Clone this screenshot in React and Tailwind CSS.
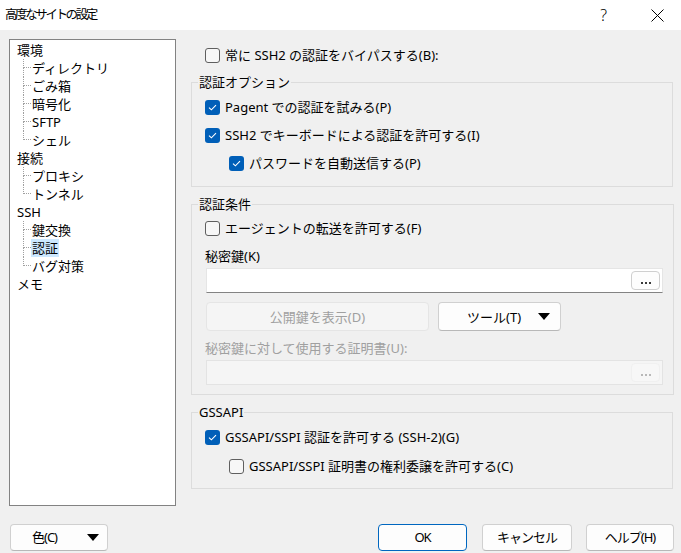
import React from 'react';

const font = "font-['Noto_Sans','Noto_Sans_CJK_JP',sans-serif]";

const treeItems = [
  { label: '環境', level: 0 },
  { label: 'ディレクトリ', level: 1 },
  { label: 'ごみ箱', level: 1 },
  { label: '暗号化', level: 1 },
  { label: 'SFTP', level: 1 },
  { label: 'シェル', level: 1, last: true },
  { label: '接続', level: 0 },
  { label: 'プロキシ', level: 1 },
  { label: 'トンネル', level: 1, last: true },
  { label: 'SSH', level: 0 },
  { label: '鍵交換', level: 1 },
  { label: '認証', level: 1, selected: true },
  { label: 'バグ対策', level: 1, last: true },
  { label: 'メモ', level: 0 },
];

const Check = ({ checked }) =>
  checked ? (
    <span className="w-[15px] h-[15px] rounded-[3px] bg-[#005fb8] flex items-center justify-center shrink-0">
      <svg width="9" height="7" viewBox="0 0 9 7">
        <path d="M1 3.6 L3.4 5.8 L8 1.2" fill="none" stroke="white" strokeWidth="1.1" />
      </svg>
    </span>
  ) : (
    <span className="w-[15px] h-[15px] rounded-[3px] border border-[#5f5f5f] bg-[#f7f7f7] shrink-0" />
  );

const CheckRow = ({ checked, children, indent }) => (
  <div className={`flex items-center h-[18px] gap-[5px] ${indent ? 'ml-[24px]' : ''}`}>
    <Check checked={checked} />
    <span>{children}</span>
  </div>
);

const Arrow = () => (
  <svg width="12" height="7" viewBox="0 0 12 7">
    <polygon points="0,0 12,0 6,7" fill="#000" />
  </svg>
);

const Dots = ({ disabled }) => (
  <div className="flex gap-[2px] items-end h-[6px]">
    <span className={`w-[2px] h-[2px] ${disabled ? 'bg-[#b8b8b8]' : 'bg-[#3a3a3a]'}`} />
    <span className={`w-[2px] h-[2px] ${disabled ? 'bg-[#b8b8b8]' : 'bg-[#3a3a3a]'}`} />
    <span className={`w-[2px] h-[2px] ${disabled ? 'bg-[#b8b8b8]' : 'bg-[#3a3a3a]'}`} />
  </div>
);

const Field = ({ disabled }) => (
  <div
    className={`ml-[1px] w-[457px] h-[25px] flex items-center justify-end pr-[2px] ${
      disabled
        ? 'bg-[#f5f5f5] border border-[#e3e3e3]'
        : 'bg-white border border-[#e5e5e5] border-b-[#838383]'
    }`}
  >
    <div
      className={`w-[29px] h-[19px] rounded-[4px] flex items-center justify-center ${
        disabled ? 'bg-[#f7f7f7] border border-[#f0f0f0]' : 'bg-[#fdfdfd] border border-[#cfcfcf]'
      }`}
    >
      <Dots disabled={disabled} />
    </div>
  </div>
);

const Group = ({ title, children, className }) => (
  <fieldset className={`border border-[#dcdcdc] pl-[13px] pr-[10px] ${className}`}>
    <legend className="-ml-[7px] px-[1px] h-[18px] leading-[18px]">{title}</legend>
    {children}
  </fieldset>
);

const TreeRow = ({ item }) => {
  if (item.level === 0) {
    return <div className="h-[18px] leading-[18px] pl-[7px]">{item.label}</div>;
  }
  return (
    <div className="h-[18px] flex items-stretch pl-[13px]">
      <div className="w-[8px] flex flex-col">
        <div className="h-[9px] border-l border-b border-dotted border-[#a0a0a0]" />
        <div className={`h-[9px] ${item.last ? '' : 'border-l border-dotted border-[#a0a0a0]'}`} />
      </div>
      <span className={`leading-[18px] px-[1px] ${item.selected ? 'bg-[#cce8ff]' : ''}`}>
        {item.label}
      </span>
    </div>
  );
};

const Button = ({ children, primary, className }) => (
  <div
    className={`h-[27px] rounded-[4px] flex items-center justify-center bg-[#fdfdfd] border ${
      primary ? 'border-[#0067c0]' : 'border-[#d0d0d0] border-b-[#b8b8b8]'
    } ${className}`}
  >
    {children}
  </div>
);

export default function App() {
  return (
    <div className={`w-[681px] h-[553px] bg-[#f0f0f0] flex flex-col text-[13px] text-black ${font}`}>
      {/* title bar */}
      <div className="h-[30px] bg-white flex items-center shrink-0">
        <span className="ml-[5px] text-[12.5px] tracking-[-2.4px]">高度なサイトの設定</span>
        <span className="ml-auto text-[16px] font-light mr-[44px]">?</span>
        <svg width="13" height="13" viewBox="0 0 13 13" className="mr-[17px]">
          <path d="M0.5 0.5 L12.5 12.5 M12.5 0.5 L0.5 12.5" stroke="#000" strokeWidth="1" />
        </svg>
      </div>

      <div className="flex pt-[9px] pl-[9px]">
        {/* tree */}
        <div className="w-[167px] h-[467px] bg-white border border-[#828282] pt-[1px] shrink-0">
          {treeItems.map((it) => (
            <TreeRow key={it.label} item={it} />
          ))}
        </div>

        {/* right pane */}
        <div className="ml-[15px] w-[482px] flex flex-col leading-[18px]">
          <div className="mt-[7px] pl-[14px]">
            <CheckRow>常に SSH2 の認証をバイパスする(B):</CheckRow>
          </div>

          <Group title="認証オプション" className="mt-[9px] pt-[7px] pb-[14px]">
            <div className="flex flex-col gap-[10px]">
              <CheckRow checked>Pagent での認証を試みる(P)</CheckRow>
              <CheckRow checked>SSH2 でキーボードによる認証を許可する(I)</CheckRow>
              <CheckRow checked indent>パスワードを自動送信する(P)</CheckRow>
            </div>
          </Group>

          <Group title="認証条件" className="mt-[8px] pt-[6px] pb-[9px]">
            <CheckRow>エージェントの転送を許可する(F)</CheckRow>
            <div className="mt-[10px] h-[18px]">秘密鍵(K)</div>
            <div className="mt-[3px]">
              <Field />
            </div>
            <div className="mt-[9px] flex gap-[9px] ml-[1px]">
              <div className="w-[223px] h-[29px] rounded-[4px] bg-[#f5f5f5] border border-[#e5e5e5] flex items-center justify-center text-[#a0a0a0]">
                公開鍵を表示(D)
              </div>
              <div className="w-[123px] h-[29px] rounded-[4px] bg-[#fdfdfd] border border-[#d0d0d0] border-b-[#b8b8b8] flex items-center pl-[28px] pr-[10px]">
                <span>ツール(T)</span>
                <span className="ml-auto">
                  <Arrow />
                </span>
              </div>
            </div>
            <div className="mt-[8px] h-[18px] text-[#a0a0a0]">秘密鍵に対して使用する証明書(U):</div>
            <div className="mt-[3px]">
              <Field disabled />
            </div>
          </Group>

          <Group title="GSSAPI" className="mt-[8px] pt-[7px] pb-[13px]">
            <div className="flex flex-col gap-[11px]">
              <CheckRow checked>GSSAPI/SSPI 認証を許可する (SSH-2)(G)</CheckRow>
              <CheckRow indent>GSSAPI/SSPI 証明書の権利委譲を許可する(C)</CheckRow>
            </div>
          </Group>
        </div>
      </div>

      {/* bottom buttons */}
      <div className="flex mt-[18px] pl-[10px] text-[13px] tracking-[-1px]">
        <Button className="w-[98px] pl-[21px] pr-[8px] !justify-start">
          <span>色(C)</span>
          <span className="ml-auto">
            <Arrow />
          </span>
        </Button>
        <Button primary className="ml-[270px] w-[89px]">
          OK
        </Button>
        <Button className="ml-[15px] w-[90px]">キャンセル</Button>
        <Button className="ml-[14px] w-[88px]">ヘルプ(H)</Button>
      </div>
    </div>
  );
}
